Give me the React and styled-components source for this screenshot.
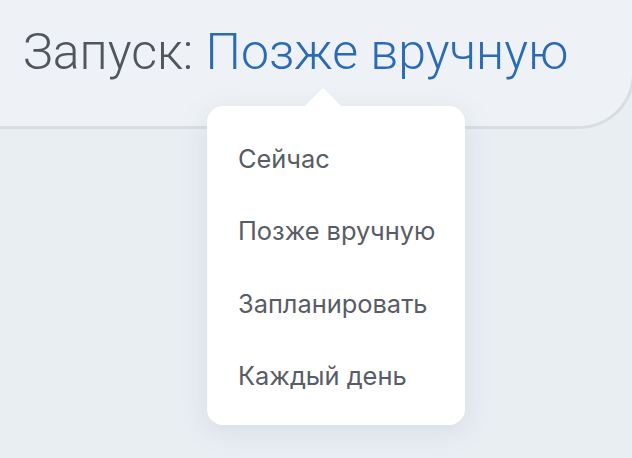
import React from "react";
import styled, { createGlobalStyle } from "styled-components";

const Global = createGlobalStyle`
  html, body { margin: 0; padding: 0; background: #e9eef3; }
  body { width: 632px; height: 458px; overflow: hidden; }
`;

const Page = styled.div`
  position: relative;
  width: 632px;
  height: 458px;
  overflow: hidden;
`;

const Card = styled.div`
  margin: -40px -3px 0 -40px;
  height: 169px;
  box-sizing: border-box;
  background: #eef2f6;
  border-bottom: 3px solid #d9dde2;
  border-right: 3px solid #d9dde2;
  border-radius: 0 0 56px 40px;
  display: flex;
  align-items: flex-start;
  padding: 67px 0 0 63px;
`;

const Title = styled.div`
  font-family: Roboto, "Noto Sans", sans-serif;
  font-weight: 300;
  font-size: 50px;
  line-height: 1;
  color: #50555e;
  white-space: nowrap;
`;

const Value = styled.span`
  color: #2a6bb4;
`;

const Popover = styled.div`
  position: absolute;
  left: 207px;
  top: 106px;
  width: 258px;
  height: 319px;
  background: #fff;
  border-radius: 16px;
  box-shadow: 0 6px 26px rgba(120, 135, 155, 0.17);
  box-sizing: border-box;
  padding: 38px 0 0 31px;
  display: flex;
  flex-direction: column;
`;

const Arrow = styled.svg`
  position: absolute;
  left: 97px;
  top: -19px;
  display: block;
`;

const Item = styled.div`
  font-family: Inter, "Noto Sans", sans-serif;
  font-size: 25.4px;
  line-height: 30px;
  height: 72.3px;
  flex: none;
  color: #575c66;
  white-space: nowrap;
`;

const items = ["Сейчас", "Позже вручную", "Запланировать", "Каждый день"];

export default function App() {
  return (
    <Page>
      <Global />
      <Card>
        <Title>
          Запуск: <Value>Позже вручную</Value>
        </Title>
      </Card>
      <Popover>
        <Arrow width="38" height="20" viewBox="0 0 38 20">
          <path d="M0 20 L17 2.5 Q19 0.5 21 2.5 L38 20 Z" fill="#fff" />
        </Arrow>
        {items.map((t) => (
          <Item key={t}>{t}</Item>
        ))}
      </Popover>
    </Page>
  );
}
